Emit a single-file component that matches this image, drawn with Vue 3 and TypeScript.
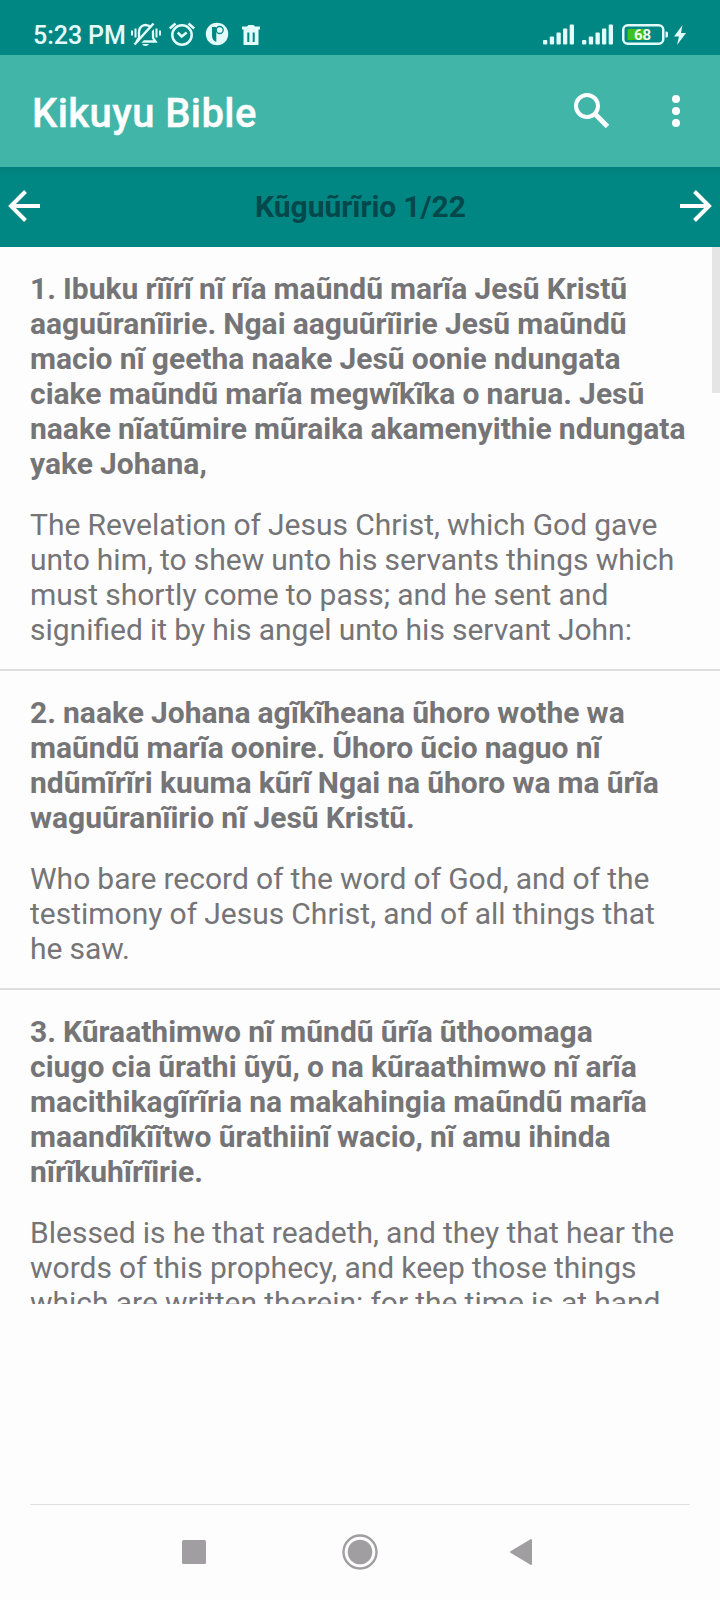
<script setup lang="ts">
interface Verse {
  native: string[]
  english: string[]
}

const verses: Verse[] = [
  {
    native: [
      '1. Ibuku rĩĩrĩ nĩ rĩa maũndũ marĩa Jesũ Kristũ',
      'aaguũranĩirie. Ngai aaguũrĩirie Jesũ maũndũ',
      'macio nĩ geetha naake Jesũ oonie ndungata',
      'ciake maũndũ marĩa megwĩkĩka o narua. Jesũ',
      'naake nĩatũmire mũraika akamenyithie ndungata',
      'yake Johana,',
    ],
    english: [
      'The Revelation of Jesus Christ, which God gave',
      'unto him, to shew unto his servants things which',
      'must shortly come to pass; and he sent and',
      'signified it by his angel unto his servant John:',
    ],
  },
  {
    native: [
      '2. naake Johana agĩkĩheana ũhoro wothe wa',
      'maũndũ marĩa oonire. Ũhoro ũcio naguo nĩ',
      'ndũmĩrĩri kuuma kũrĩ Ngai na ũhoro wa ma ũrĩa',
      'waguũranĩirio nĩ Jesũ Kristũ.',
    ],
    english: [
      'Who bare record of the word of God, and of the',
      'testimony of Jesus Christ, and of all things that',
      'he saw.',
    ],
  },
  {
    native: [
      '3. Kũraathimwo nĩ mũndũ ũrĩa ũthoomaga',
      'ciugo cia ũrathi ũyũ, o na kũraathimwo nĩ arĩa',
      'macithikagĩrĩria na makahingia maũndũ marĩa',
      'maandĩkĩĩtwo ũrathiinĩ wacio, nĩ amu ihinda',
      'nĩrĩkuhĩrĩirie.',
    ],
    english: [
      'Blessed is he that readeth, and they that hear the',
      'words of this prophecy, and keep those things',
      'which are written therein: for the time is at hand.',
    ],
  },
]
</script>

<template>
  <div class="screen">
    <div class="status">
      <span class="clock">5:23 PM</span>
      <svg class="bell" width="32" height="28" viewBox="0 0 32 28" fill="none" stroke="#e2fbfb" stroke-width="2">
        <path d="M8 21.5h17.500l-2.500-3.500V13c0-4-2.300-7-5.500-7.700C13 4 9 7.500 9 12v6l-2.500 3.500" stroke-width="2.300" />
        <path d="M6.500 26L25.500 5" stroke="#008784" stroke-width="3" />
        <path d="M4.500 24.500L23.500 3.500" stroke-width="2.500" />
        <path d="M2 10.500v5M5.500 8.500v9M26.500 8.500v9M30 10.500v5" />
        <path d="M12 24a4 4 0 0 0 7 0z" fill="#e2fbfb" stroke="none" />
      </svg>
      <svg class="alarm" width="28" height="28" viewBox="0 0 28 28" fill="none" stroke="#e2fbfb" stroke-width="2.500">
        <circle cx="14" cy="15" r="9.700" />
        <path d="M1.800 8.500L7.500 3.500M20.500 3.500L26.200 8.500M9.700 12.500l4 4 5-4" />
      </svg>
      <svg class="round" width="24" height="24" viewBox="0 0 24 24">
        <circle cx="12" cy="12" r="11.200" fill="#e2fbfb" />
        <path d="M7 5h4.300v15a7 7 0 0 1-4.300-6z" fill="#008784" />
        <circle cx="14.700" cy="8" r="3.500" fill="#e2fbfb" stroke="#008784" stroke-width="1.300" />
      </svg>
      <svg class="trash" width="20" height="22" viewBox="0 0 20 22">
        <path d="M1 2.500h5L7.500 1h5L14 2.500h5v3H1zM2.500 5.500h15V21h-15z" fill="#e2fbfb" />
        <path d="M7.300 8.500v9.500M12.700 8.500v9.500" stroke="#008784" stroke-width="2" />
      </svg>
      <span class="spacer"></span>
      <svg v-for="n in 2" :key="n" class="signal" width="32" height="21" viewBox="0 0 32 21" fill="#e2fbfb">
        <rect y="16" width="4.300" height="4.500" rx="1" />
        <rect x="6.800" y="12.500" width="4.300" height="8" rx="1" />
        <rect x="13.500" y="8.500" width="4.300" height="12" rx="1" />
        <rect x="20" y="4.500" width="4.300" height="16" rx="1" />
        <rect x="26.700" y="0.500" width="4.300" height="20" rx="1" />
      </svg>
      <svg class="battery" width="48" height="22" viewBox="0 0 48 22">
        <rect x="1.250" y="1.250" width="40" height="18.500" rx="4.500" fill="none" stroke="#e2fbfb" stroke-width="2.500" />
        <rect x="5.500" y="5" width="18" height="11" fill="#3fc11c" />
        <path d="M43.500 7.500h1q1.500 0 1.500 1.500v3q0 1.500-1.500 1.500h-1z" fill="#e2fbfb" />
        <text x="20.500" y="15.800" text-anchor="middle" class="charge">68</text>
      </svg>
      <svg class="bolt" width="14" height="22" viewBox="0 0 14 22">
        <path d="M9.500 1L1 12.500h5L4 21l9-12H8z" fill="#e2fbfb" />
      </svg>
    </div>

    <header class="appbar">
      <h1>Kikuyu Bible</h1>
      <svg class="search" width="36" height="36" viewBox="0 0 36 36" fill="none" stroke="#fff">
        <circle cx="13" cy="13" r="11" stroke-width="4" />
        <path d="M21.800 21.800L33.500 33.500" stroke-width="4.800" />
      </svg>
      <svg width="8" height="32" viewBox="0 0 8 32" fill="#fff">
        <circle cx="4" cy="4" r="4" />
        <circle cx="4" cy="16" r="4" />
        <circle cx="4" cy="28" r="4" />
      </svg>
    </header>

    <nav class="chapter">
      <svg width="32" height="32" viewBox="0 0 32 32" fill="none" stroke="#fff" stroke-width="4">
        <path d="M32 16H3M17.500 1.500L3 16l14.500 14.500" />
      </svg>
      <h2>Kũguũrĩrio 1/22</h2>
      <svg width="32" height="32" viewBox="0 0 32 32" fill="none" stroke="#fff" stroke-width="4">
        <path d="M0 16h29M14.500 1.500L29 16 14.500 30.500" />
      </svg>
    </nav>

    <main class="list">
      <article v-for="(verse, i) in verses" :key="i" class="verse">
        <p class="native"><span v-for="line in verse.native" :key="line">{{ line }}</span></p>
        <p class="english"><span v-for="line in verse.english" :key="line">{{ line }}</span></p>
      </article>
      <i class="thumb"></i>
    </main>

    <footer class="system">
      <svg width="24" height="24" viewBox="0 0 24 24"><rect width="24" height="24" rx="1.500" fill="#a09ea0" /></svg>
      <svg class="home" width="36" height="36" viewBox="0 0 36 36">
        <circle cx="18" cy="18" r="16.500" fill="none" stroke="#a09ea0" stroke-width="2.400" />
        <circle cx="18" cy="18" r="12.300" fill="#a09ea0" />
      </svg>
      <svg width="24" height="28" viewBox="0 0 24 28">
        <path d="M2 14L22 2v24z" fill="#a09ea0" stroke="#a09ea0" stroke-width="2" stroke-linejoin="round" />
      </svg>
    </footer>
  </div>
</template>

<style>
body {
  margin: 0;
  background: #fdfdfd;
}
</style>

<style scoped>
.screen {
  width: 720px;
  height: 1600px;
  display: flex;
  flex-direction: column;
  overflow: hidden;
  background: #fdfdfd;
  font-family: Roboto, "Noto Sans", sans-serif;
}
svg {
  display: block;
  flex: none;
}
h1,
h2,
p {
  margin: 0;
}
.status {
  box-sizing: border-box;
  height: 55px;
  padding: 20px 33px 0 33px;
  display: flex;
  align-items: flex-start;
  background: #008784;
}
.clock {
  width: 97px;
  white-space: nowrap;
  color: #e2fbfb;
  font-size: 25px;
  font-weight: 500;
  line-height: 31px;
  word-spacing: -0.500px;
}
.alarm {
  margin-left: 6px;
}
.round {
  margin: 2px 0 0 9px;
}
.trash {
  margin: 4px 0 0 12px;
}
.spacer {
  flex: 1;
}
.signal {
  margin: 4px 7px 0 0;
}
.battery {
  margin: 4px 3px 0 1px;
}
.bolt {
  margin-top: 4px;
}
.charge {
  fill: #f2ffe8;
  font-size: 15px;
  font-weight: 700;
}
.appbar {
  box-sizing: border-box;
  height: 112px;
  padding: 0 40px 0 32px;
  display: flex;
  align-items: center;
  background: #42b5a9;
}
.appbar h1 {
  flex: 1;
  padding-top: 5px;
  color: #fff;
  font-size: 40px;
  font-weight: 500;
  line-height: 48px;
  letter-spacing: 0.400px;
  -webkit-text-stroke: 0.400px #fff;
}
.search {
  margin: 0 62px 0 0;
}
.chapter {
  box-sizing: border-box;
  height: 80px;
  padding: 0 8px 2px;
  display: flex;
  align-items: center;
  justify-content: space-between;
  background: linear-gradient(#03807b, #008784 8px);
}
.chapter h2 {
  padding-left: 1px;
  color: #05484b;
  font-size: 30px;
  font-weight: 700;
  line-height: 35px;
  word-spacing: -0.500px;
}
.list {
  position: relative;
  height: 1057px;
  overflow: hidden;
  color: #757477;
  font-size: 30px;
  line-height: 35px;
  word-spacing: -0.330px;
}
.verse {
  padding: 24px 30px 22px;
  border-bottom: 2px solid #dedede;
}
.verse p span {
  display: block;
  white-space: nowrap;
}
.native {
  margin-bottom: 26px;
  font-weight: 700;
}
.thumb {
  position: absolute;
  top: 0;
  right: 0;
  width: 8px;
  height: 146px;
  background: #e6e5e6;
}
.system {
  box-sizing: border-box;
  height: 96px;
  margin: auto 30px 0;
  padding: 0 157px 2px 152px;
  border-top: 1px solid #dfdfdf;
  display: flex;
  align-items: center;
  justify-content: space-between;
}
.home {
  margin-left: 5px;
}
</style>
